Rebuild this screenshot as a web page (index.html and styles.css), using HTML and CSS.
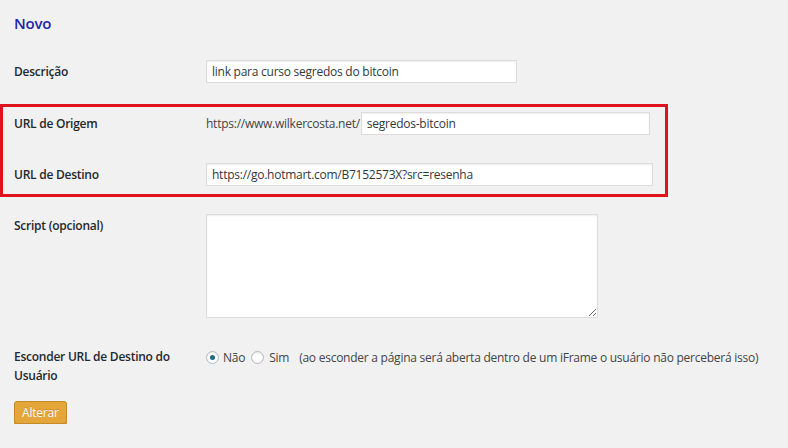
FILE: index.html
```html
<!DOCTYPE html>
<html lang="pt-BR">
<head>
<meta charset="utf-8">
<title>Novo</title>
<link rel="stylesheet" href="styles.css">
</head>
<body>
<h2 class="title">Novo</h2>
<form class="form">
  <div class="row">
    <label class="label">Descrição</label>
    <div class="field"><input class="text w-desc" type="text" value="link para curso segredos do bitcoin"></div>
  </div>
  <div class="box">
    <div class="row">
      <label class="label">URL de Origem</label>
      <div class="field"><span class="prefix">https://www.wilkercosta.net/</span><input class="text w-orig" type="text" value="segredos-bitcoin"></div>
    </div>
    <div class="row row-gap">
      <label class="label">URL de Destino</label>
      <div class="field"><input class="text w-dest" type="text" value="https://go.hotmart.com/B7152573X?src=resenha"></div>
    </div>
  </div>
  <div class="row row-top row-script">
    <label class="label label-top">Script (opcional)</label>
    <div class="field"><textarea class="area"></textarea></div>
  </div>
  <div class="row row-top row-hide">
    <label class="label label-hide">Esconder URL de Destino do Usuário</label>
    <div class="field radios">
      <input class="radio" type="radio" name="hide" checked><span class="opt">Não</span>
      <input class="radio radio2" type="radio" name="hide"><span class="opt">Sim</span>
      <span class="note">(ao esconder a página será aberta dentro de um iFrame o usuário não perceberá isso)</span>
    </div>
  </div>
  <button class="btn" type="button">Alterar</button>
</form>
</body>
</html>
```
FILE: styles.css
```css
html, body {
  margin: 0;
  background: #f1f1f1;
}
body {
  padding: 13px 14px 0;
  font-family: "Open Sans", "Noto Sans", sans-serif;
  font-size: 12px;
  letter-spacing: -0.25px;
  color: #444;
}
.title {
  margin: 0;
  font-size: 15px;
  line-height: 20px;
  font-weight: 600;
  letter-spacing: -0.2px;
  color: #2424a8;
}
.form {
  margin: 27px 0 0;
  display: flex;
  flex-direction: column;
  align-items: flex-start;
}
.row {
  display: flex;
  align-items: center;
}
.row-top {
  align-items: flex-start;
}
.row-gap {
  margin-top: 28px;
}
.label {
  width: 192px;
  flex: none;
  font-weight: 600;
  color: #23282d;
  line-height: 19px;
}
.label-top {
  padding-top: 2px;
}
.label-hide {
  width: 182px;
  padding-right: 10px;
}
.field {
  display: flex;
  align-items: center;
  white-space: nowrap;
}
.prefix {
  margin-right: 1px;
  color: #444;
}
.text {
  box-sizing: border-box;
  height: 23px;
  margin: 0;
  padding: 0 5px;
  border: 1px solid #dcdcdc;
  box-shadow: inset 0 1px 2px rgba(0, 0, 0, 0.07);
  background: #fff;
  font-family: inherit;
  font-size: 12px;
  letter-spacing: -0.25px;
  color: #32373c;
  outline: none;
}
.w-desc { width: 311px; }
.w-orig { width: 289px; }
.w-dest { width: 447px; }
.box {
  box-sizing: border-box;
  width: 668px;
  margin: 21px 0 0 -14px;
  padding: 5px 0 8px 11px;
  border: 3px solid #e0121b;
}
.row-script {
  margin-top: 17px;
}
.area {
  box-sizing: border-box;
  width: 392px;
  height: 104px;
  margin: 0;
  border: 1px solid #dcdcdc;
  box-shadow: inset 0 1px 2px rgba(0, 0, 0, 0.07);
  background: #fff;
  outline: none;
}
.row-hide {
  margin-top: 29px;
}
.radios {
  height: 21px;
  color: #444;
}
.radio {
  appearance: none;
  -webkit-appearance: none;
  box-sizing: border-box;
  width: 13px;
  height: 13px;
  margin: 0 4px 0 0;
  border: 1px solid #b4b9be;
  border-radius: 50%;
  background: #fff;
  box-shadow: inset 0 1px 2px rgba(0, 0, 0, 0.1);
  display: inline-flex;
  align-items: center;
  justify-content: center;
}
.radio:checked::before {
  content: "";
  width: 5px;
  height: 5px;
  border-radius: 50%;
  background: #1e6a86;
}
.radio2 {
  margin-left: 6px;
  margin-right: 5px;
}
.note {
  margin-left: 10px;
}
.btn {
  margin-top: 16px;
  box-sizing: border-box;
  height: 23px;
  padding: 0 7px;
  border: 1px solid #c48b28;
  border-radius: 3px;
  background: #e4a53b;
  color: #fff;
  font-family: inherit;
  font-size: 12px;
  letter-spacing: -0.2px;
  text-shadow: 0 -1px 0 rgba(150, 100, 20, 0.4);
  box-shadow: 0 1px 0 #c48b28;
  cursor: pointer;
}
```
